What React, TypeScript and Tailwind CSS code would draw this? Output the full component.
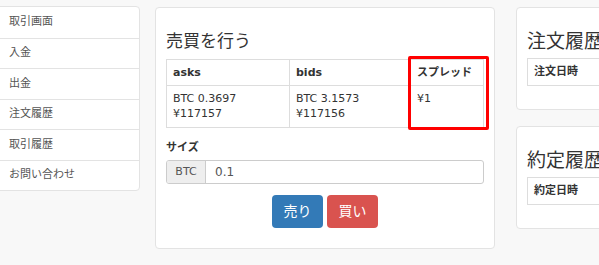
const navItems = ['取引画面', '入金', '出金', '注文履歴', '取引履歴', 'お問い合わせ'];

const font = { fontFamily: '"DejaVu Sans", "Noto Sans CJK JP", sans-serif' };

function HistoryPanel({ title, column }: { title: string; column: string }) {
  return (
    <div className="bg-white border border-[#e3e3e3] rounded-[4px] pt-[22px] pb-[23px] pl-[10px]">
      <h3 className="text-[19px] leading-[22px] text-[#333] whitespace-nowrap mb-[6px]">{title}</h3>
      <div className="border border-[#ddd] border-r-0 h-[28px] flex items-center px-[6px] text-[11px] font-bold text-[#333] whitespace-nowrap">
        {column}
      </div>
    </div>
  );
}

const cell = 'border border-[#ddd] text-left align-top px-[6px] py-[5px] leading-[15px]';

export default function App() {
  return (
    <div className="w-[599px] h-[265px] overflow-hidden bg-[#f8f8f8] relative" style={font}>
      <div className="flex items-start pt-[6px]">
        {/* side nav */}
        <div className="ml-[-7px] w-[147px] shrink-0 bg-white border border-[#e3e3e3] rounded-[4px]">
          {navItems.map((item, i) => (
            <div
              key={item}
              className={`h-[30.5px] flex items-center pl-[15px] text-[11px] text-[#555] ${i > 0 ? 'border-t border-[#e3e3e3]' : ''}`}
            >
              {item}
            </div>
          ))}
        </div>

        {/* trade panel */}
        <div className="ml-[15px] w-[340px] shrink-0 bg-white border border-[#e3e3e3] rounded-[4px] mt-[1px] px-[10px] pt-[22px] pb-[20px]">
          <h3 className="text-[17px] leading-[22px] text-[#333] mb-[7px]">売買を行う</h3>
          <table className="w-full border-collapse text-[11px] text-[#333]">
            <thead>
              <tr className="h-[26px]">
                <th className={`w-[123px] font-bold ${cell}`}>asks</th>
                <th className={`w-[121px] font-bold ${cell}`}>bids</th>
                <th className={`font-bold ${cell}`}>スプレッド</th>
              </tr>
            </thead>
            <tbody>
              <tr className="h-[42px]">
                <td className={cell}>
                  BTC 0.3697<br />¥117157
                </td>
                <td className={cell}>
                  BTC 3.1573<br />¥117156
                </td>
                <td className={cell}>¥1</td>
              </tr>
            </tbody>
          </table>

          <label className="block mt-[11px] mb-[4px] text-[11px] leading-[17px] font-bold text-[#333]">サイズ</label>
          <div className="flex h-[24px] border border-[#ccc] rounded-[3px] overflow-hidden">
            <span className="w-[39px] shrink-0 bg-[#eee] border-r border-[#ccc] flex items-center justify-center text-[11px] text-[#555]">
              BTC
            </span>
            <span className="flex-1 flex items-center pl-[9px] text-[12px] text-[#555]">0.1</span>
          </div>

          <div className="flex justify-center gap-[4px] mt-[11px]">
            <button className="w-[51px] h-[33px] rounded-[4px] bg-[#337ab7] text-white text-[14px]">売り</button>
            <button className="w-[51px] h-[33px] rounded-[4px] bg-[#d9534f] text-white text-[14px]">買い</button>
          </div>
        </div>

        {/* history panels */}
        <div className="ml-[21px] w-[200px] shrink-0 flex flex-col gap-[16px] mt-[1px]">
          <HistoryPanel title="注文履歴" column="注文日時" />
          <HistoryPanel title="約定履歴" column="約定日時" />
        </div>
      </div>

      {/* annotation box */}
      <div className="absolute left-[408px] top-[56px] w-[81px] h-[74px] border-[3px] border-[#ff0000] rounded-[2px]" />
    </div>
  );
}
